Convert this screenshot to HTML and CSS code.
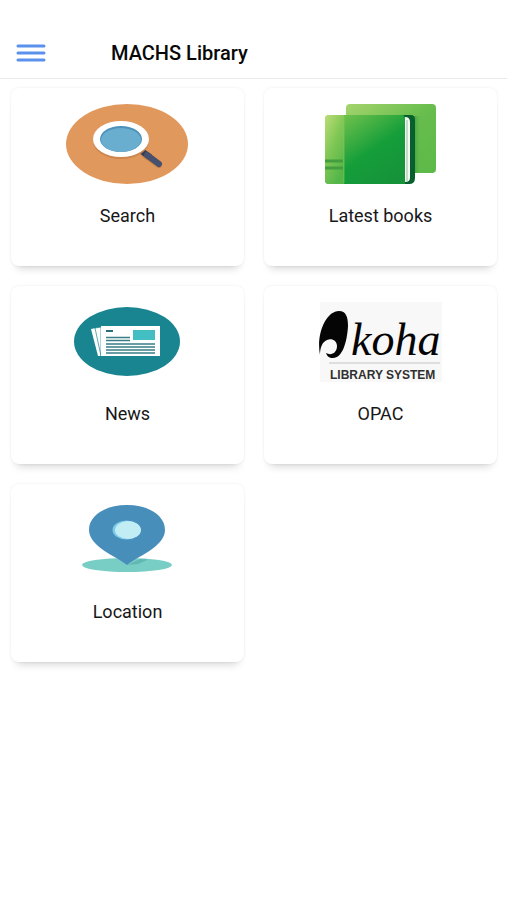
FILE: index.html
```html
<!DOCTYPE html>
<html lang="en">
<head>
<meta charset="utf-8">
<meta name="viewport" content="width=device-width, initial-scale=1">
<title>MACHS Library</title>
<link rel="stylesheet" href="styles.css">
</head>
<body>
<header class="bar">
  <button class="menu" type="button" aria-label="Menu">
    <svg class="menu-icon" viewBox="0 0 30 20" aria-hidden="true"><path d="M2 3H28M2 10H28M2 17H28"/></svg>
  </button>
  <h1 class="title">MACHS Library</h1>
</header>
<main class="grid">
  <a class="card" href="#search">
    <svg class="art" viewBox="0 0 124 80" aria-hidden="true">
      <ellipse cx="61" cy="40" rx="61" ry="40" fill="#e1985c"/>
      <path d="M79 51L93 61" stroke="#c77d48" stroke-width="6" stroke-linecap="round"/>
      <path d="M74 46L84 53" stroke="#343e55" stroke-width="6"/>
      <path d="M81 51L93 60" stroke="#47506c" stroke-width="6" stroke-linecap="round"/>
      <ellipse cx="55" cy="37" rx="28" ry="18" fill="#cc8650"/>
      <ellipse cx="55" cy="35" rx="28" ry="18" fill="#fff"/>
      <ellipse cx="55" cy="35" rx="21" ry="13" fill="#4b91ba"/>
      <ellipse cx="55" cy="36" rx="20" ry="12" fill="#69adcf"/>
    </svg>
    <span class="label">Search</span>
  </a>
  <a class="card" href="#latest">
    <svg class="art" viewBox="0 0 124 80" aria-hidden="true">
      <defs>
        <linearGradient id="back" x1="0" y1="0" x2="1" y2="1"><stop offset="0" stop-color="#a5d46d"/><stop offset=".5" stop-color="#67bd4d"/><stop offset="1" stop-color="#5cb948"/></linearGradient>
        <linearGradient id="front" x1="0" y1="0" x2=".8" y2="1"><stop offset="0" stop-color="#86ca50"/><stop offset=".6" stop-color="#159e3a"/><stop offset="1" stop-color="#16933a"/></linearGradient>
        <linearGradient id="spine" x1="0" y1="0" x2=".6" y2="1"><stop offset="0" stop-color="#bddd78"/><stop offset=".5" stop-color="#80c755"/><stop offset="1" stop-color="#54b649"/></linearGradient>
        <linearGradient id="shade"><stop offset="0" stop-color="#217e35" stop-opacity=".8"/><stop offset="1" stop-color="#5cb948" stop-opacity="0"/></linearGradient>
      </defs>
      <rect x="27" y="0" width="90" height="69" rx="4" fill="url(#back)"/>
      <path d="M93 12h9v57h-9z" fill="url(#shade)"/>
      <path d="M80 11h12q4 0 4 5v58q0 6-6 6H80z" fill="#075f2d"/>
      <path d="M86 13q5 0 5 5v56q0 4-5 4z" fill="#f4faf2"/>
      <path d="M88 16v61" stroke="#9dbaa0"/>
      <path d="M10 11h73q3 0 3 4v65H10q-4 0-4-4V15q0-4 4-4z" fill="url(#front)"/>
      <path d="M10 11h15v69H10q-4 0-4-4V15q0-4 4-4z" fill="url(#spine)"/>
      <path d="M6 57h18M6 64h18" stroke="#449d3e" stroke-width="3"/>
      <path d="M25 12v67" stroke="#8aca5d" opacity=".6"/>
    </svg>
    <span class="label">Latest books</span>
  </a>
  <a class="card" href="#news">
    <svg class="art" viewBox="0 0 124 80" aria-hidden="true">
      <ellipse cx="61" cy="39.500" rx="53" ry="34.500" fill="#188591"/>
      <path d="M25 27l5-1 6 28h-4z" fill="#fff"/>
      <path d="M29 26l6-1v29z" fill="#fff" stroke="#188591" stroke-width=".7"/>
      <path d="M35 24h59v30H35z" fill="#fff"/>
      <path d="M40 28h7v2h-7z" fill="#276f7c"/>
      <path d="M67 28h22v10H67z" fill="#43bfc4"/>
      <path d="M40 35.500h24M40 38.500h24M40 42h49M40 45h49M40 48h49M40 51h49" stroke="#397d87" stroke-width="1.400"/>
    </svg>
    <span class="label">News</span>
  </a>
  <a class="card" href="#opac">
    <svg class="art" viewBox="0 0 124 80" role="img" aria-label="Koha Library System">
      <path d="M1 0h122v80H1z" fill="#f8f8f8"/>
      <path d="M1 53C-3 32 7 9 20 9c7 0 9 6 9 15-1 17-6 32-15 32-4 0-6-2-7-5 5 3 11 0 11-7 0-5-5-8-10-6-5 2-7 8-7 15z" fill="#050505"/>
      <text class="logo" x="32" y="53">koha</text>
      <path d="M10 61h111" stroke="#dedede" stroke-width="2"/>
      <text class="logo-sub" x="11" y="77">LIBRARY SYSTEM</text>
    </svg>
    <span class="label">OPAC</span>
  </a>
  <a class="card" href="#location">
    <svg class="art" viewBox="0 0 124 80" aria-hidden="true">
      <ellipse cx="61" cy="65" rx="45" ry="7" fill="#78cec5"/>
      <path d="M61 65l13-6q9 0 7 1l-9 4z" fill="#61b8b3"/>
      <path d="M61 65C52 57 23 47 23 30C23 15 40 5 61 5s38 10 38 25C99 47 70 57 61 65z" fill="#488ebb"/>
      <ellipse cx="60.500" cy="30" rx="14" ry="9.500" fill="#7acbe6"/>
      <ellipse cx="62" cy="30" rx="13" ry="9" fill="#c2edf5"/>
    </svg>
    <span class="label">Location</span>
  </a>
</main>
</body>
</html>
```
FILE: styles.css
```css
* { box-sizing: border-box; }
body {
  margin: 0;
  background: #fff;
  color: #171717;
  font-family: Roboto, "Noto Sans", sans-serif;
}
.bar {
  display: flex;
  align-items: center;
  gap: 65px;
  padding: 28px 16px 0;
  height: 79px;
  border-bottom: 1px solid #e9e9e9;
}
.menu {
  display: flex;
  padding: 0;
  border: 0;
  background: none;
}
.menu-icon {
  width: 30px;
  height: 20px;
  fill: none;
  stroke: #5a91ec;
  stroke-width: 3;
  stroke-linecap: round;
}
.title {
  margin: 0;
  font-size: 20px;
  line-height: 28px;
  font-weight: 500;
  color: #080808;
}
.grid {
  display: grid;
  grid-template-columns: 1fr 1fr;
  gap: 20px;
  padding: 9px 10px 20px 11px;
}
.card {
  display: flex;
  flex-direction: column;
  align-items: center;
  gap: 18px;
  min-height: 178px;
  padding: 16px 8px;
  border-radius: 8px;
  background: #fff;
  box-shadow: 0 0 3px rgba(0, 0, 0, .08), 0 8px 8px -6px rgba(0, 0, 0, .18);
  color: inherit;
  text-decoration: none;
}
.art {
  width: 124px;
  height: 80px;
}
.label {
  font-size: 18px;
  line-height: 28px;
}
.logo {
  font: italic 46px "Liberation Serif", serif;
  fill: #050505;
}
.logo-sub {
  font: bold 12px "Liberation Sans", sans-serif;
  fill: #303030;
}
```
